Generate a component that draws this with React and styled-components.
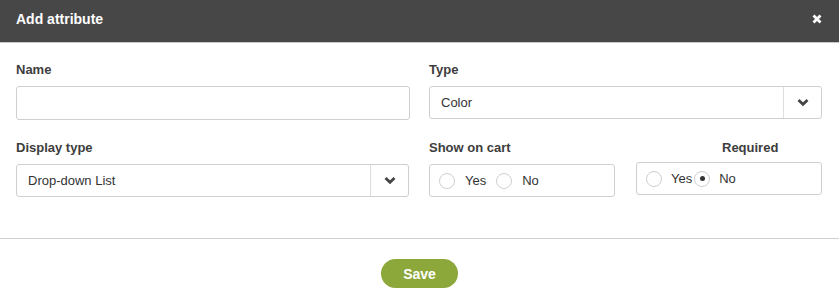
import React, { useState } from "react";
import styled, { createGlobalStyle } from "styled-components";

const GlobalStyle = createGlobalStyle`
  body {
    margin: 0;
    background: #fff;
    font-family: "Liberation Sans", Arial, sans-serif;
  }
`;

const Modal = styled.div`
  width: 839px;
  height: 304px;
  background: #fff;
  display: flex;
  flex-direction: column;
`;

const Header = styled.div`
  height: 42px;
  background: #474747;
  border-bottom: 1px solid #c8c8c8;
  display: flex;
  align-items: center;
  justify-content: space-between;
  padding: 0 16px;
  box-sizing: content-box;
`;

const Title = styled.h2`
  margin: 0;
  color: #fff;
  font-size: 14px;
  font-weight: 700;
  padding-bottom: 4px;
`;

const Close = styled.button`
  border: 0;
  background: none;
  padding: 0;
  width: 10px;
  height: 10px;
  margin-right: 1px;
  margin-bottom: 4px;
  display: flex;
  cursor: pointer;
`;

const Body = styled.div`
  padding: 19px 17px 0 16px;
  height: 176px;
  border-bottom: 1px solid #cfcfcf;
  display: grid;
  grid-template-columns: 1fr 1fr;
  column-gap: 20px;
  row-gap: 20px;
  align-content: start;
`;

const Field = styled.div`
  display: flex;
  flex-direction: column;
`;

const Label = styled.label`
  font-size: 13px;
  font-weight: 700;
  color: #3d3d3d;
  line-height: 16px;
  margin-bottom: 8px;
  padding-left: ${p => p.$indent || 0}px;
`;

const Input = styled.input`
  height: 34px;
  box-sizing: border-box;
  border: 1px solid #cfcfcf;
  border-radius: 3px;
  padding: 0 11px;
  font-size: 13px;
  font-family: inherit;
  outline: none;
  margin-right: -1px;
`;

const SelectBox = styled.div`
  height: 33px;
  box-sizing: border-box;
  border: 1px solid #cfcfcf;
  border-radius: 3px;
  display: flex;
  align-items: center;
  font-size: 13px;
  color: #333;
`;

const SelectValue = styled.span`
  flex: 1;
  padding-left: 11px;
`;

const Arrow = styled.span`
  width: 37px;
  align-self: stretch;
  border-left: 1px solid #dedede;
  display: flex;
  align-items: center;
  justify-content: center;
`;

const SplitRow = styled.div`
  display: grid;
  grid-template-columns: 1fr 1fr;
  column-gap: 21px;
`;

const RadioBox = styled.div`
  height: 33px;
  box-sizing: border-box;
  border: 1px solid #cfcfcf;
  border-radius: 3px;
  display: flex;
  align-items: center;
  padding-left: 9px;
  margin-top: ${p => p.$lift ? -2 : 0}px;
  font-size: 13px;
  color: #333;
`;

const RadioOption = styled.label`
  display: flex;
  align-items: center;
  margin-right: ${p => p.$gap}px;
  cursor: pointer;
`;

const Circle = styled.span`
  width: 16px;
  height: 16px;
  box-sizing: border-box;
  border: 1px solid #cfcfcf;
  border-radius: 50%;
  display: flex;
  align-items: center;
  justify-content: center;
  margin-right: ${p => p.$space}px;

  &::after {
    content: "";
    width: 5px;
    height: 5px;
    border-radius: 50%;
    background: ${p => (p.$on ? "#333" : "transparent")};
  }
`;

const Footer = styled.div`
  flex: 1;
  display: flex;
  justify-content: center;
  padding-top: 20px;
`;

const SaveButton = styled.button`
  width: 77px;
  height: 29px;
  border: 0;
  border-radius: 15px;
  background: #8ca73a;
  color: #fff;
  font-family: inherit;
  font-size: 14px;
  font-weight: 700;
  cursor: pointer;
`;

const Chevron = () => (
  <svg width="12" height="9" viewBox="0 0 12 9">
    <polyline points="1.5,2 6,6.3 10.5,2" fill="none" stroke="#444" strokeWidth="2.8" />
  </svg>
);

const Radio = ({ label, on, onPick, gap, space }) => (
  <RadioOption $gap={gap} onClick={onPick}>
    <Circle $on={on} $space={space} />
    {label}
  </RadioOption>
);

const App = () => {
  const [cart, setCart] = useState(null);
  const [required, setRequired] = useState("no");

  return (
    <>
      <GlobalStyle />
      <Modal>
        <Header>
          <Title>Add attribute</Title>
          <Close aria-label="close">
            <svg width="10" height="10" viewBox="0 0 10 10">
              <path d="M1.5 1.5 L8.5 8.5 M8.5 1.5 L1.5 8.5" stroke="#fff" strokeWidth="2.8" />
            </svg>
          </Close>
        </Header>
        <Body>
          <Field>
            <Label>Name</Label>
            <Input type="text" />
          </Field>
          <Field>
            <Label>Type</Label>
            <SelectBox>
              <SelectValue>Color</SelectValue>
              <Arrow><Chevron /></Arrow>
            </SelectBox>
          </Field>
          <Field>
            <Label>Display type</Label>
            <SelectBox>
              <SelectValue>Drop-down List</SelectValue>
              <Arrow><Chevron /></Arrow>
            </SelectBox>
          </Field>
          <SplitRow>
            <Field>
              <Label>Show on cart</Label>
              <RadioBox>
                <Radio label="Yes" on={cart === "yes"} onPick={() => setCart("yes")} gap={10} space={10} />
                <Radio label="No" on={cart === "no"} onPick={() => setCart("no")} gap={0} space={10} />
              </RadioBox>
            </Field>
            <Field>
              <Label $indent={86}>Required</Label>
              <RadioBox $lift>
                <Radio label="Yes" on={required === "yes"} onPick={() => setRequired("yes")} gap={2} space={9} />
                <Radio label="No" on={required === "no"} onPick={() => setRequired("no")} gap={0} space={9} />
              </RadioBox>
            </Field>
          </SplitRow>
        </Body>
        <Footer>
          <SaveButton>Save</SaveButton>
        </Footer>
      </Modal>
    </>
  );
};

export default App;
